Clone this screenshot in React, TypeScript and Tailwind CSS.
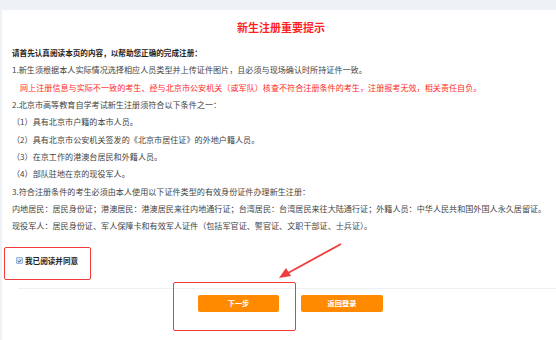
import React from "react";

const font = { fontFamily: '"Noto Sans CJK SC", "Noto Sans", sans-serif' };

const lines: { text: string; red?: boolean; indent?: boolean }[] = [
  { text: "1.新生须根据本人实际情况选择相应人员类型并上传证件图片，且必须与现场确认时所持证件一致。" },
  {
    text: "网上注册信息与实际不一致的考生、经与北京市公安机关（或军队）核查不符合注册条件的考生，注册报考无效，相关责任自负。",
    red: true,
    indent: true,
  },
  { text: "2.北京市高等教育自学考试新生注册须符合以下条件之一：" },
  { text: "（1）具有北京市户籍的本市人员。" },
  { text: "（2）具有北京市公安机关签发的《北京市居住证》的外地户籍人员。" },
  { text: "（3）在京工作的港澳台居民和外籍人员。" },
  { text: "（4）部队驻地在京的现役军人。" },
  { text: "3.符合注册条件的考生必须由本人使用以下证件类型的有效身份证件办理新生注册：" },
  {
    text: "内地居民：居民身份证；港澳居民：港澳居民来往内地通行证；台湾居民：台湾居民来往大陆通行证；外籍人员：中华人民共和国外国人永久居留证。",
  },
  { text: "现役军人：居民身份证、军人保障卡和有效军人证件（包括军官证、警官证、文职干部证、士兵证）。" },
];

export default function App() {
  return (
    <div className="relative w-[556px] h-[340px] overflow-hidden bg-[#eef2f6] pt-[10px] pl-[2px]" style={font}>
      <div className="h-full bg-white flex flex-col">
        {/* title */}
        <div className="pt-[9px] text-center text-[11px] leading-[16px] font-bold text-[#ff1f1f] pl-[4px]">
          新生注册重要提示
        </div>

        {/* notice */}
        <div className="mt-[9px] pl-[10px] text-[8.1px] leading-[17.35px] text-[#444]">
          <div className="font-bold text-[#222] text-[7.6px]">请首先认真阅读本页的内容，以帮助您正确的完成注册：</div>
          {lines.map((l, i) => (
            <div
              key={i}
              className={`whitespace-nowrap ${l.red ? "text-[#ff2a2a]" : ""} ${l.indent ? "pl-[8px]" : ""}`}
            >
              {l.text}
            </div>
          ))}
        </div>

        {/* agree */}
        <div className="mt-[21px] flex items-center gap-[2px] pl-[14px]">
          <span className="w-[7px] h-[7px] rounded-[1px] bg-[#cfe0f5] border border-[#9bb7dc] flex items-center justify-center">
            <svg viewBox="0 0 8 8" className="w-[6px] h-[6px]">
              <path d="M1.3 4.2 L3.2 6 L6.8 1.8" fill="none" stroke="#333" strokeWidth="1.2" />
            </svg>
          </span>
          <span className="text-[7.6px] leading-[10px] font-bold text-[#222]">我已阅读并同意</span>
        </div>

        {/* footer */}
        <div className="mt-[22px] ml-[16px] border-t border-[#eef0f3] pt-[6px] flex gap-[22px] pl-[180px]">
          <button className="w-[81px] h-[17px] rounded-[2px] bg-[#ff8a00] text-white text-[7.2px] font-bold leading-[17px]">
            下一步
          </button>
          <button className="w-[82px] h-[17px] rounded-[2px] bg-[#ff8a00] text-white text-[7.2px] font-bold leading-[17px]">
            返回登录
          </button>
        </div>
      </div>

      {/* annotations */}
      <div className="absolute left-[4px] top-[247px] w-[87px] h-[33px] border-[1.5px] border-[#f23b3b] rounded-[2px]" />
      <div className="absolute left-[173px] top-[282px] w-[123px] h-[49px] border-[1.5px] border-[#f23b3b] rounded-[2px]" />
      <svg className="absolute left-0 top-0" width="556" height="340">
        <line x1="341" y1="244" x2="288" y2="273" stroke="#f23b3b" strokeWidth="1.8" />
        <polygon points="279,278 286,268 291,276" fill="#f23b3b" />
      </svg>
    </div>
  );
}
